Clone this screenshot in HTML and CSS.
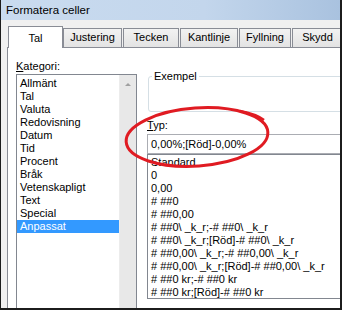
FILE: index.html
```html
<!DOCTYPE html>
<html lang="sv">

<head>
    <meta charset="UTF-8">
    <title>Formatera celler</title>
    <link rel="stylesheet" href="styles.css">
</head>

<body>
    <div class="window">
        <!-- titelrad -->
        <div class="titlebar">Formatera celler</div>

        <!-- flikar -->
        <ul class="tabs">
            <li class="tab active">Tal</li>
            <li class="tab w-just">Justering</li>
            <li class="tab w-teck">Tecken</li>
            <li class="tab w-kant">Kantlinje</li>
            <li class="tab w-fyll">Fyllning</li>
            <li class="tab w-skydd">Skydd</li>
        </ul>

        <div class="panel">
            <!-- kategori -->
            <div class="col-left">
                <div class="label"><u>K</u>ategori:</div>
                <div class="listbox">
                    <ul class="items">
                        <li>Allmänt</li>
                        <li>Tal</li>
                        <li>Valuta</li>
                        <li>Redovisning</li>
                        <li>Datum</li>
                        <li>Tid</li>
                        <li>Procent</li>
                        <li>Bråk</li>
                        <li>Vetenskapligt</li>
                        <li>Text</li>
                        <li>Special</li>
                        <li class="selected">Anpassat</li>
                    </ul>
                    <div class="scrollbar">
                        <span class="arrow-up"></span>
                    </div>
                </div>
            </div>

            <!-- typ -->
            <div class="col-right">
                <fieldset class="groupbox">
                    <legend>Exempel</legend>
                </fieldset>
                <div class="label typ"><u>T</u>yp:</div>
                <div class="input">0,00%;[Röd]-0,00%</div>
                <ul class="formats">
                    <li>Standard</li>
                    <li>0</li>
                    <li>0,00</li>
                    <li># ##0</li>
                    <li># ##0,00</li>
                    <li># ##0\ _k_r;-# ##0\ _k_r</li>
                    <li># ##0\ _k_r;[Röd]-# ##0\ _k_r</li>
                    <li># ##0,00\ _k_r;-# ##0,00\ _k_r</li>
                    <li># ##0,00\ _k_r;[Röd]-# ##0,00\ _k_r</li>
                    <li># ##0 kr;-# ##0 kr</li>
                    <li># ##0 kr;[Röd]-# ##0 kr</li>
                </ul>
            </div>
        </div>

        <!-- röd markering -->
        <svg class="mark" width="160" height="76" viewBox="0 0 160 76">
            <ellipse cx="75" cy="33" rx="71" ry="29" transform="rotate(-4 75 33)" fill="none" stroke="#e01b22" stroke-width="3" />
            <path d="M118 7 Q134 10 142 16" fill="none" stroke="#e01b22" stroke-width="2.5" />
        </svg>
    </div>
</body>

</html>
```

FILE: styles.css
```css
/* reset */
* {
    margin: 0;
    box-sizing: border-box;
}

ul {
    list-style: none;
    padding: 0;
}

body {
    background: #fff;
    font-family: "Liberation Sans", Arial, sans-serif;
    font-size: 11px;
    color: #000;
}

/* window */
.window {
    position: relative;
    width: 342px;
    height: 310px;
    overflow: hidden;
    background: #f0f0f0;
    border-left: 1px solid #1c1c1c;
    border-right: 2px solid #1c1c1c;
    border-bottom: 2px solid #1c1c1c;
}

.titlebar {
    height: 20px;
    padding-left: 5px;
    line-height: 20px;
    font-size: 11.5px;
    background: linear-gradient(to right, #c9dbef 0%, #c3d6ec 60%, #a9c2df 100%);
}

/* tabs */
.tabs {
    display: flex;
    align-items: flex-end;
    height: 27px;
    padding-left: 7px;
}

.tab {
    flex: none;
    height: 19px;
    margin-right: 1px;
    border: 1px solid #898c95;
    border-bottom: none;
    background: linear-gradient(#f2f2f2, #e3e3e3);
    text-align: center;
    line-height: 17px;
}

.tab.active {
    position: relative;
    z-index: 1;
    width: 55px;
    height: 22px;
    margin-bottom: -1px;
    margin-right: 0;
    background: #fff;
    line-height: 22px;
}

.w-just { width: 59px; }
.w-teck { width: 56px; }
.w-kant { width: 58px; }
.w-fyll { width: 52px; }
.w-skydd { width: 51px; }

/* panel */
.panel {
    display: flex;
    width: 600px;
    height: 300px;
    margin-left: 6px;
    padding: 12px 0 0 8px;
    background: #fff;
    border: 1px solid #898c95;
}

.label {
    height: 13px;
    line-height: 13px;
}

.col-left {
    flex: none;
    width: 121px;
    margin-right: 10px;
}

.listbox {
    display: flex;
    height: 260px;
    margin-top: 1px;
    border: 1px solid #828790;
}

.items {
    flex: 1;
    padding-top: 2px;
}

.items li,
.formats li {
    height: 13px;
    padding-left: 3px;
    line-height: 13px;
    white-space: nowrap;
}

.items li.selected {
    background: #3399ff;
    color: #fff;
}

.scrollbar {
    display: flex;
    justify-content: center;
    width: 17px;
    padding-top: 8px;
    background: #e8e8e8;
    border-left: 1px solid #ececec;
}

.arrow-up {
    width: 0;
    height: 0;
    border-left: 3px solid transparent;
    border-right: 3px solid transparent;
    border-bottom: 3px solid #a0a0a0;
}

/* right side */
.col-right {
    flex: none;
    width: 400px;
}

.groupbox {
    height: 42px;
    margin: 10px 0 0 1px;
    padding: 0 0 0 3px;
    border: 1px solid #d5dfe5;
    border-radius: 3px;
}

.groupbox legend {
    padding: 0 2px;
    line-height: 13px;
}

.typ {
    margin-top: 7px;
}

.input {
    height: 20px;
    margin-top: 2px;
    padding-left: 3px;
    border: 1px solid #abadb3;
    line-height: 18px;
}

.formats {
    height: 145px;
    padding-top: 1px;
    border: 1px solid #828790;
}

/* red mark */
.mark {
    position: absolute;
    left: 121px;
    top: 104px;
}
```
